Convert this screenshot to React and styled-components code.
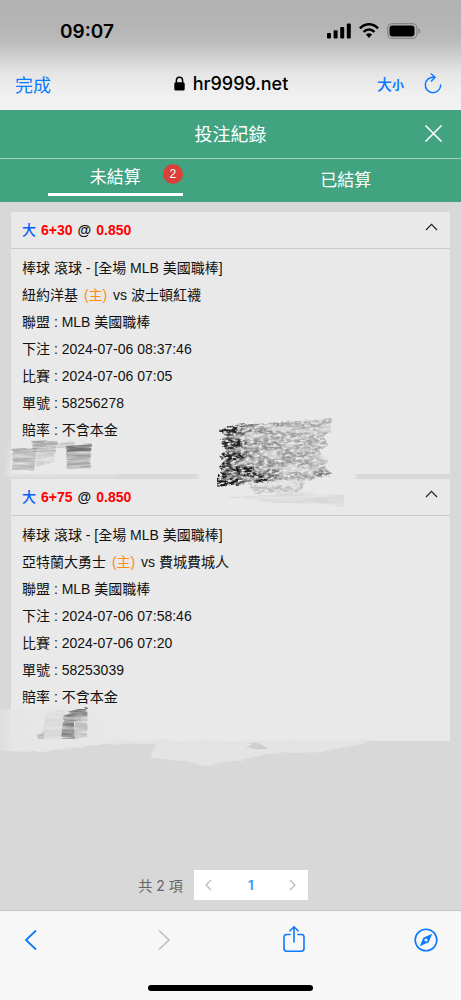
import { useState } from "react";
import styled, { createGlobalStyle } from "styled-components";

const bets = [
  {
    side: "大",
    line: "6+30",
    odds: "0.850",
    game: "棒球 滾球 - [全場 MLB 美國職棒]",
    home: "紐約洋基",
    away: "波士頓紅襪",
    details: [
      ["聯盟", "MLB 美國職棒"],
      ["下注", "2024-07-06 08:37:46"],
      ["比賽", "2024-07-06 07:05"],
      ["單號", "58256278"],
      ["賠率", "不含本金"],
    ],
    Strokes: FirstStrokes,
  },
  {
    side: "大",
    line: "6+75",
    odds: "0.850",
    game: "棒球 滾球 - [全場 MLB 美國職棒]",
    home: "亞特蘭大勇士",
    away: "費城費城人",
    details: [
      ["聯盟", "MLB 美國職棒"],
      ["下注", "2024-07-06 07:58:46"],
      ["比賽", "2024-07-06 07:20"],
      ["單號", "58253039"],
      ["賠率", "不含本金"],
    ],
    Strokes: SecondStrokes,
  },
];

const GlobalStyle = createGlobalStyle`
  *{
    box-sizing: border-box;
  }
  body{
    margin: 0;
    background: #d8d8d8;
    color: #111;
    font-family: "Liberation Sans", "Noto Sans CJK TC", sans-serif;
    font-size: 14px;
  }
  button{
    padding: 0;
    border: 0;
    background: none;
    color: inherit;
    font: inherit;
    cursor: pointer;
  }
  svg{
    display: block;
  }
`;

const Screen = styled.div`
  display: flex;
  flex-direction: column;
  min-height: 100vh;
  overflow: hidden;
`;

const BrowserTop = styled.div`
  height: 110px;
  background: linear-gradient(#b2b2b2 0, #b5b5b5 28px, #bcbcbc 42px, #d2d2d2 58px, #e4e4e4 72px, #efefef 92px, #f3f3f3 110px);
  color: #000;
  font-family: Inter, "Noto Sans CJK TC", sans-serif;
`;

const StatusBar = styled.div`
  display: flex;
  align-items: center;
  justify-content: space-between;
  height: 62px;
  padding: 0 40px 0 60px;
  time{
    font-size: 19px;
    font-weight: 600;
  }
`;

const StatusIcons = styled.div`
  display: flex;
  align-items: center;
  gap: 8px;
`;

const AddressBar = styled.div`
  display: grid;
  grid-template-columns: 1fr auto 1fr;
  align-items: center;
  height: 43px;
  padding: 0 18px 0 15px;
`;

const TextButton = styled.button`
  color: #0a7aff;
  font-size: 18px;
  text-align: left;
`;

const Address = styled.div`
  display: flex;
  align-items: center;
  gap: 8px;
  padding-left: 4px;
  font-size: 18px;
  font-weight: 500;
`;

const AddressTools = styled.div`
  display: flex;
  align-items: center;
  justify-content: flex-end;
  gap: 19px;
  color: #0a7aff;
`;

const SizeButton = styled.button`
  font-size: 15px;
  font-weight: 500;
  small{
    font-size: 12px;
    font-weight: 700;
  }
`;

const TitleBar = styled.header`
  display: grid;
  grid-template-columns: 1fr auto 1fr;
  align-items: center;
  height: 49px;
  padding: 0 18px 2px;
  border-bottom: 1px solid #a5cfbf;
  background: #41a380;
  color: #fff;
  h1{
    grid-column: 2;
    margin: 0;
    font-size: 18px;
    font-weight: 400;
  }
  button{
    justify-self: end;
  }
`;

const Tabs = styled.nav`
  display: grid;
  grid-template-columns: 1fr 1fr;
  height: 43px;
  background: #41a380;
  color: #fff;
`;

const Tab = styled.button`
  position: relative;
  justify-self: center;
  align-self: center;
  width: 135px;
  height: 31px;
  padding-bottom: ${(props) => (props.$active ? "3px" : "0")};
  border-bottom: ${(props) => (props.$active ? "3px solid #fff" : "0")};
  font-size: 17px;
  line-height: 20px;
`;

const Badge = styled.span`
  position: absolute;
  top: -1px;
  right: 0;
  width: 20px;
  height: 20px;
  border-radius: 50%;
  background: #d9403a;
  font-size: 12px;
`;

const BetList = styled.main`
  display: flex;
  flex: 1;
  flex-direction: column;
  gap: 5px;
  padding: 10px 11px;
`;

const StyledBet = styled.article`
  position: relative;
  background: #e9e9e9;
`;

const BetHeader = styled.div`
  display: flex;
  align-items: center;
  justify-content: space-between;
  height: 37px;
  padding: 0 12px 0 11px;
  border-bottom: 1px solid #cbcbcb;
  h2{
    display: flex;
    gap: 5px;
    margin: 0;
    font-size: 14px;
    line-height: 20px;
  }
`;

const Side = styled.span`
  color: #0a5cff;
  font-weight: 500;
`;

const Odds = styled.span`
  color: #f00;
`;

const BetBody = styled.div`
  padding: 6px 11px 30px;
  line-height: 27px;
  p{
    margin: 0;
  }
`;

const Home = styled.span`
  margin: 0 2px;
  color: #ff8c0a;
`;

const StyledStrokes = styled.svg`
  position: absolute;
  z-index: 1;
  left: -11px;
  width: 461px;
  pointer-events: none;
`;

const Pagination = styled.nav`
  display: flex;
  align-items: center;
  justify-content: center;
  gap: 11px;
  padding: 0 15px 10px 0;
  color: #666;
  font-family: Inter, "Noto Sans CJK TC", sans-serif;
`;

const Pager = styled.div`
  display: grid;
  grid-template-columns: 30px 1fr 30px;
  place-items: center;
  width: 114px;
  height: 30px;
  background: #fff;
  color: #b4b8bf;
`;

const PageNumber = styled.button`
  color: #409eff;
  font-size: 13px;
  font-weight: 700;
`;

const BottomBar = styled.footer`
  display: flex;
  flex-direction: column;
  align-items: center;
  justify-content: space-between;
  height: 90px;
  padding: 12px 23px 9px 22px;
  border-top: 1px solid #c4c4c4;
  background: #f7f7f7;
`;

const Tools = styled.div`
  display: flex;
  justify-content: space-between;
  width: 100%;
  color: #0a7aff;
  button:disabled{
    color: #bfbfbf;
  }
`;

const HomeIndicator = styled.div`
  width: 165px;
  height: 6px;
  border-radius: 3px;
  background: #000;
`;

export default function App() {
  return (
    <>
      <GlobalStyle />
      <Screen>
        <BrowserHeader />
        <TitleBar>
          <h1>投注紀錄</h1>
          <button aria-label="關閉">
            <svg width="19" height="19" viewBox="0 0 19 19" fill="none" stroke="currentColor" strokeWidth="1.6">
              <path d="M1.5 1.5 17.5 17.5M17.5 1.5 1.5 17.5" />
            </svg>
          </button>
        </TitleBar>
        <Tabs>
          <Tab $active>
            未結算
            <Badge>2</Badge>
          </Tab>
          <Tab>已結算</Tab>
        </Tabs>
        <BetList>
          {bets.map((bet) => (
            <Bet key={bet.line} bet={bet} />
          ))}
        </BetList>
        <Pagination>
          <span>共 2 項</span>
          <Pager>
            <button disabled aria-label="上一頁">
              <Chevron d="M7 1 2 6l5 5" />
            </button>
            <PageNumber>1</PageNumber>
            <button disabled aria-label="下一頁">
              <Chevron d="m2 1 5 5-5 5" />
            </button>
          </Pager>
        </Pagination>
        <BrowserFooter />
      </Screen>
    </>
  );
}

function Bet({ bet }) {
  const [open, setOpen] = useState(true);
  const { Strokes } = bet;
  return (
    <StyledBet>
      <BetHeader>
        <h2>
          <Side>{bet.side}</Side>
          <Odds>{bet.line}</Odds>
          <span>@</span>
          <Odds>{bet.odds}</Odds>
        </h2>
        <button aria-label="展開" aria-expanded={open} onClick={() => setOpen(!open)}>
          <svg width="13" height="14" viewBox="0 0 13 14" fill="none" stroke="#222" strokeWidth="1.2">
            <path d={open ? "M1 7 6.5 1.3 12 7" : "M1 2 6.5 7.7 12 2"} />
          </svg>
        </button>
      </BetHeader>
      {open && (
        <BetBody>
          <p>{bet.game}</p>
          <p>
            {bet.home} <Home>(主)</Home> vs <span>{bet.away}</span>
          </p>
          {bet.details.map(([label, value]) => (
            <p key={label}>
              {label} : {value}
            </p>
          ))}
        </BetBody>
      )}
      {open && <Strokes />}
    </StyledBet>
  );
}

function Chevron({ d }) {
  return (
    <svg width="9" height="12" viewBox="0 0 9 12" fill="none" stroke="currentColor" strokeWidth="1.2">
      <path d={d} />
    </svg>
  );
}

// Charcoal scribbles that cover the amounts
function FirstStrokes() {
  return (
    <StyledStrokes style={{ top: 190 }} height="120" viewBox="0 402 461 120">
      <defs>
        <filter id="grain" x="-10%" y="-10%" width="120%" height="120%">
          <feTurbulence type="fractalNoise" baseFrequency="0.22 0.4" numOctaves="4" seed="4" result="noise" />
          <feColorMatrix in="noise" values="0 0 0 0 0  0 0 0 0 0  0 0 0 0 0  3 0 0 0 -0.8" result="mask" />
          <feTurbulence type="fractalNoise" baseFrequency="0.05 0.15" numOctaves="2" seed="7" result="patches" />
          <feColorMatrix in="patches" values="0 0 0 0 0  0 0 0 0 0  0 0 0 0 0  3.5 0 0 0 -1" result="patchMask" />
          <feDisplacementMap in="SourceGraphic" in2="noise" scale="4" result="rough" />
          <feComposite in="rough" in2="mask" operator="in" result="grained" />
          <feComposite in="grained" in2="patchMask" operator="arithmetic" k1="0.7" k2="0.4" />
          <feGaussianBlur stdDeviation="0.4" />
        </filter>
        <filter id="smear" x="-10%" y="-20%" width="120%" height="140%">
          <feTurbulence type="fractalNoise" baseFrequency="0.03 0.3" numOctaves="3" seed="9" result="noise" />
          <feColorMatrix in="noise" values="0 0 0 0 0  0 0 0 0 0  0 0 0 0 0  2 0 0 0 -0.3" result="mask" />
          <feDisplacementMap in="SourceGraphic" in2="noise" scale="4" result="rough" />
          <feComposite in="rough" in2="mask" operator="in" />
          <feGaussianBlur stdDeviation="0.6" />
        </filter>
        <filter id="soft" x="-10%" y="-60%" width="120%" height="220%">
          <feGaussianBlur stdDeviation="2" />
        </filter>
        <linearGradient id="charcoal">
          <stop offset="0" stopColor="#333" stopOpacity="0.95" />
          <stop offset="0.22" stopColor="#444" stopOpacity="0.8" />
          <stop offset="0.36" stopColor="#666" stopOpacity="0.5" />
          <stop offset="1" stopColor="#777" stopOpacity="0.35" />
        </linearGradient>
        <linearGradient id="dark">
          <stop offset="0" stopColor="#222" stopOpacity="0.95" />
          <stop offset="0.45" stopColor="#333" stopOpacity="0.8" />
          <stop offset="1" stopColor="#555" stopOpacity="0" />
        </linearGradient>
      </defs>
      <path d="M9 448H118V476L6 477Z" fill="#e9e9e9" opacity="0.6" filter="url(#soft)" />
      <path d="M198 470H356V482H198Z" fill="#e9e9e9" filter="url(#soft)" />
      <g filter="url(#smear)">
        <path d="M12 450 37 448 36 456 34 471 12 471Z" fill="#999" opacity="0.7" />
        <path d="M32 442 57 441 56 451 33 452Z" fill="#888" opacity="0.7" />
        <path d="M37 451 56 451 54 462 36 467Z" fill="#aaa" opacity="0.45" />
        <path d="M57 443 75 441 75 449 57 449Z" fill="#aaa" opacity="0.6" />
        <path d="M66 446 92 444 91 451 67 452Z" fill="#666" opacity="0.9" />
        <path d="M66 451 91 451 90 469 67 469Z" fill="#888" opacity="0.75" />
      </g>
      <g filter="url(#grain)">
        <path
          d="M219 429 235 425 332 419 330 431 324 436 328 445 319 451 328 461 324 466 331 473 314 479 218 486 217 479 224 475 219 467 224 461 219 456 226 450 221 441 225 436Z"
          fill="url(#charcoal)"
        />
        <path d="M219 429H238V433H219ZM222 437H240V447H222ZM221 456H245V461H221Z" fill="#333" opacity="0.7" />
        <path d="M223 468 258 467 285 472 282 479 217 486 217 478Z" fill="url(#dark)" />
        <path d="M217 478 258 474 270 481 217 487Z" fill="#222" opacity="0.8" />
        <path d="M312 471 331 472 329 475 313 479Z" fill="#555" opacity="0.5" />
        <path d="M250 486 305 480 300 491 255 494Z" fill="#999" opacity="0.3" />
      </g>
      <g filter="url(#smear)">
        <path d="M225 497 300 492 344 495 344 506 285 503Z" fill="#bbb" opacity="0.35" />
      </g>
    </StyledStrokes>
  );
}

function SecondStrokes() {
  return (
    <StyledStrokes style={{ top: 216 }} height="80" viewBox="0 695 461 80">
      <defs>
        <linearGradient id="fade">
          <stop offset="0" stopColor="#e6e6e6" stopOpacity="0.4" />
          <stop offset="0.1" stopColor="#e6e6e6" />
          <stop offset="1" stopColor="#e9e9e9" />
        </linearGradient>
        <filter id="edge">
          <feTurbulence type="fractalNoise" baseFrequency="0.04 0.3" numOctaves="2" result="noise" />
          <feDisplacementMap in="SourceGraphic" in2="noise" scale="5" />
          <feGaussianBlur stdDeviation="0.6" />
        </filter>
      </defs>
      <g filter="url(#edge)">
        <path d="M0 709 90 709 151 737 140 744 94 745 42 752 0 751Z" fill="url(#fade)" />
        <path d="M100 740H378L362 744 340 748 322 752 268 754 240 760 205 765 150 757 156 745 110 744Z" fill="#e4e4e4" />
      </g>
      <g filter="url(#smear)">
        <path d="M45 712 65 710 62 738 43 738Z" fill="#bbb" opacity="0.35" />
        <path d="M64 714 88 708 87 717 74 722 75 739 61 739Z" fill="#777" opacity="0.9" />
        <path d="M75 719 88 715 87 737 75 739Z" fill="#aaa" opacity="0.65" />
        <path d="M64 714 88 708 86 712 68 717Z" fill="#666" opacity="0.7" />
        <path d="M37 735 44 733 43 738 37 738Z" fill="#999" opacity="0.7" />
        <path d="M250 745 258 742 268 749 246 749Z" fill="#aaa" opacity="0.45" />
      </g>
    </StyledStrokes>
  );
}

function BrowserHeader() {
  return (
    <BrowserTop>
      <StatusBar>
        <time>09:07</time>
        <StatusIcons>
          <svg width="24" height="16" viewBox="0 0 24 16">
            <rect x="0" y="10" width="4" height="5.5" rx="1" />
            <rect x="6.6" y="7.2" width="4" height="8.3" rx="1" />
            <rect x="13.2" y="4" width="4" height="11.5" rx="1" />
            <rect x="19.8" y="0.5" width="4" height="15" rx="1" />
          </svg>
          <svg width="20" height="16" viewBox="0 0 20 16" fill="none" stroke="#000" strokeWidth="2.6">
            <path d="M1 5.4C6-.1 14-.1 19 5.4" />
            <path d="M4.6 9c3-3.3 7.8-3.3 10.8 0" />
            <path d="M6.9 11.6c1.8-1.7 4.4-1.7 6.2 0L10 15Z" fill="#000" stroke="none" />
          </svg>
          <svg width="34" height="16" viewBox="0 0 34 16">
            <rect x="0.6" y="0.6" width="29.4" height="14.8" rx="4.6" fill="none" stroke="#858585" strokeWidth="1.2" />
            <rect x="2.5" y="2.5" width="25" height="11" rx="3" />
            <path d="M31.5 5.2c2.4.8 2.4 4.8 0 5.6Z" fill="#858585" />
          </svg>
        </StatusIcons>
      </StatusBar>
      <AddressBar>
        <TextButton>完成</TextButton>
        <Address>
          <svg width="11" height="15" viewBox="0 0 11 15">
            <rect x="0.3" y="6.3" width="10.4" height="8.2" rx="1.6" />
            <path d="M2.4 7V4.3a3.1 3.1 0 0 1 6.2 0V7" fill="none" stroke="#000" strokeWidth="1.5" />
          </svg>
          <span>hr9999.net</span>
        </Address>
        <AddressTools>
          <SizeButton>
            大<small>小</small>
          </SizeButton>
          <button aria-label="重新載入">
            <svg width="20" height="22" viewBox="0 0 20 22" fill="none" stroke="currentColor" strokeWidth="1.5" strokeLinecap="round">
              <path d="M11 4.3A7.7 7.7 0 1 0 17.7 12" />
              <path d="M8.3 1 12 4.4 8.5 8.1" />
            </svg>
          </button>
        </AddressTools>
      </AddressBar>
    </BrowserTop>
  );
}

function BrowserFooter() {
  return (
    <BottomBar>
      <Tools>
        <button aria-label="返回">
          <svg width="24" height="32" viewBox="0 0 24 32" fill="none" stroke="currentColor" strokeWidth="1.8" strokeLinecap="round">
            <path d="M13.5 8 4 17l9.500 9" />
          </svg>
        </button>
        <button disabled aria-label="前進">
          <svg width="18" height="32" viewBox="0 0 18 32" fill="none" stroke="currentColor" strokeWidth="1.6" strokeLinecap="round">
            <path d="M4.500 8 14 17 4.500 26" />
          </svg>
        </button>
        <button aria-label="分享">
          <svg width="22" height="32" viewBox="0 0 22 32" fill="none" stroke="currentColor" strokeWidth="1.6" strokeLinecap="round">
            <path d="M7 11.500H3.600A2.600 2.600 0 0 0 1 14.100v11.500A2.600 2.600 0 0 0 3.600 28.200h14.800a2.600 2.600 0 0 0 2.600-2.600V14.100A2.600 2.600 0 0 0 18.400 11.500H15" />
            <path d="M11 19V4M7 7.800 11 3.800l4 4" />
          </svg>
        </button>
        <button aria-label="Safari">
          <svg width="24" height="32" viewBox="0 0 24 32" fill="none">
            <circle cx="12" cy="17" r="10.800" stroke="currentColor" strokeWidth="1.6" />
            <path
              d="M18.200 10.800 14.700 19.300 5.800 23.200 9.300 14.700ZM12 15.400a1.600 1.600 0 1 0 0 3.200 1.600 1.600 0 0 0 0-3.200Z"
              fill="currentColor"
              fillRule="evenodd"
            />
          </svg>
        </button>
      </Tools>
      <HomeIndicator />
    </BottomBar>
  );
}
